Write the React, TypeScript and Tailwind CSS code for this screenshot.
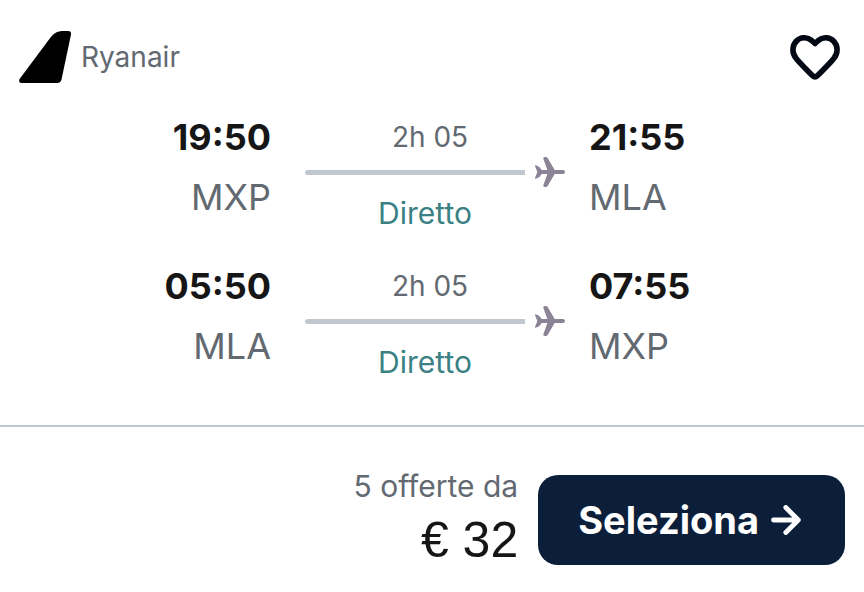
type Leg = {
  departure: string;
  from: string;
  duration: string;
  stops: string;
  arrival: string;
  to: string;
};

const legs: Leg[] = [
  {
    departure: "19:50",
    from: "MXP",
    duration: "2h 05",
    stops: "Diretto",
    arrival: "21:55",
    to: "MLA",
  },
  {
    departure: "05:50",
    from: "MLA",
    duration: "2h 05",
    stops: "Diretto",
    arrival: "07:55",
    to: "MXP",
  },
];

function TailLogo() {
  return (
    <svg viewBox="0 0 52 52" className="size-13" aria-hidden="true">
      <path d="M.6 48 31.5 6.500C35 2 39 0 44 0H49.500Q52.500 0 52 3.500L42.500 48.500Q41.500 52 38 52H2.500Q-1 51.500 .6 48Z" />
    </svg>
  );
}

function HeartIcon() {
  return (
    <svg
      viewBox="0 0 50 45"
      className="h-[45px] w-[50px]"
      fill="none"
      stroke="currentColor"
      strokeWidth="5.6"
      strokeLinejoin="round"
      aria-hidden="true"
    >
      <path d="M25 8.500 21.700 5.500C17.200 1.800 10.500 1.800 6.500 6 1.800 10.800 1.800 18 6.200 23.500 10.200 28.600 16.500 34.500 23 41q2 2 4 0C33.500 34.500 39.800 28.600 43.800 23.500 48.200 18 48.200 10.800 43.500 6 39.500 1.800 32.800 1.800 28.300 5.500Z" />
    </svg>
  );
}

function PlaneIcon() {
  return (
    <svg
      viewBox="0 0 90 90"
      className="size-[30px] shrink-0 fill-[#8b8496]"
      aria-hidden="true"
    >
      <path d="M25 5Q24 0 29 0H33Q36 0 38 3L59 39H84Q90 39 90 45T84 51H59L38 87Q36 90 33 90H29Q24 90 25 85L37 51H20Q15 60 8 63L1 65Q0 65 0 63L7 45 0 27Q0 25 1 25L8 27Q15 30 20 39H37Z" />
    </svg>
  );
}

function ArrowIcon() {
  return (
    <svg
      viewBox="0 0 30 30"
      className="size-[30px]"
      fill="none"
      stroke="currentColor"
      strokeWidth="4.8"
      strokeLinecap="round"
      strokeLinejoin="round"
      aria-hidden="true"
    >
      <path d="M2.500 15H27M14.800 2.500 27.300 15 14.800 27.500" />
    </svg>
  );
}

function LegRow({ leg }: { leg: Leg }) {
  return (
    <li className="grid grid-cols-[1fr_260px_1fr]">
      <div className="pr-[34px] text-right text-4xl leading-[60px]">
        <p className="font-bold text-[#161616]">{leg.departure}</p>
        <p className="text-[#626971]">{leg.from}</p>
      </div>
      <div className="pt-2.5 text-center leading-10">
        <p className="pr-2.5 text-[28px] text-[#626971]">{leg.duration}</p>
        <div className="flex items-center gap-2.5">
          <span className="h-[5px] flex-1 rounded-l-full bg-[#c1c7cf]"></span>
          <PlaneIcon />
        </div>
        <p className="mt-1.5 pr-5 text-[30px] text-[#3a8184]">{leg.stops}</p>
      </div>
      <div className="pl-6 text-4xl leading-[60px]">
        <p className="font-bold text-[#161616]">{leg.arrival}</p>
        <p className="text-[#626971]">{leg.to}</p>
      </div>
    </li>
  );
}

export default function App() {
  return (
    <main className="min-h-screen bg-white font-['Inter','Liberation_Sans',sans-serif]">
      <header className="flex items-center justify-between pt-[31px] pr-6 pl-[19px]">
        <div className="flex items-center gap-2.5">
          <TailLogo />
          <span className="text-[28px] text-[#626971]">Ryanair</span>
        </div>
        <button
          type="button"
          aria-label="Salva"
          className="cursor-pointer text-[#020914]"
        >
          <HeartIcon />
        </button>
      </header>

      <ul className="flex flex-col gap-[23px] pt-6 pb-[43px] pl-1.5">
        {legs.map((leg) => (
          <LegRow key={leg.departure} leg={leg} />
        ))}
      </ul>

      <footer className="flex items-center justify-end gap-5 border-t-2 border-[#c1c7cf] pt-[39px] pr-[19px]">
        <div className="text-right">
          <p className="text-[30px] leading-10 text-[#626971]">5 offerte da</p>
          <p className="font-['Liberation_Sans',Arial,sans-serif] text-[50px] leading-[68px] text-[#161616]">
            € 32
          </p>
        </div>
        <button
          type="button"
          className="flex h-[90px] cursor-pointer items-center gap-3 rounded-[20px] bg-[#0c1f3a] pr-11 pl-10 text-[38px] font-bold text-white"
        >
          Seleziona
          <ArrowIcon />
        </button>
      </footer>
    </main>
  );
}
